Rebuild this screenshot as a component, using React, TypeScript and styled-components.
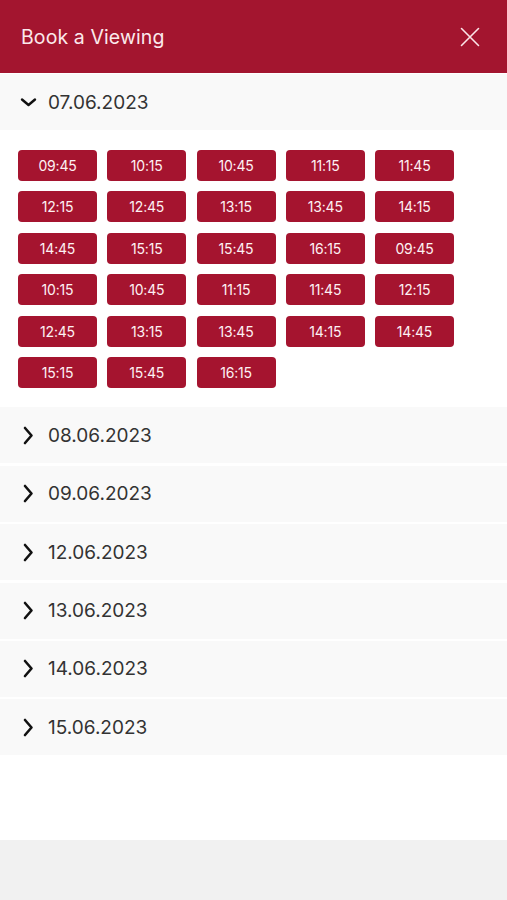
import React from 'react'
import styled, { createGlobalStyle } from 'styled-components'

const GlobalStyle = createGlobalStyle`
  html, body {
    margin: 0;
    padding: 0;
    background: #ffffff;
  }
  * {
    box-sizing: border-box;
  }
`

const Page = styled.div`
  display: flex;
  flex-direction: column;
  height: 100vh;
  font-family: Inter, 'Open Sans', 'Liberation Sans', sans-serif;
  background: #ffffff;
`

const TopBar = styled.div`
  display: flex;
  align-items: center;
  justify-content: space-between;
  height: 73px;
  padding: 0 27px 0 21px;
  background: #a3152f;
  flex-shrink: 0;
`

const Title = styled.h1`
  margin: 0;
  font-size: 19.5px;
  font-weight: 400;
  color: #fbe9ec;
  letter-spacing: 0.1px;
`

const CloseButton = styled.button`
  all: unset;
  cursor: pointer;
  display: flex;
  width: 20px;
  height: 20px;
  margin-top: 1px;
`

const List = styled.div`
  display: flex;
  flex-direction: column;
  gap: 2.4px;
  padding-top: 1px;
`

const DayHeader = styled.button`
  all: unset;
  cursor: pointer;
  display: flex;
  align-items: center;
  gap: 10px;
  width: 100%;
  height: 56px;
  padding: 0 0 0 19px;
  background: #f9f9f9;
  color: #333333;
  font-size: 19px;
  font-weight: 400;
`

const ChevronBox = styled.span`
  display: flex;
  width: 19px;
  justify-content: center;
`

const Slots = styled.div`
  display: grid;
  grid-template-columns: repeat(5, 79px);
  grid-auto-rows: 31px;
  column-gap: 10.25px;
  row-gap: 10.4px;
  padding: 20px 18px 17px;
  background: #ffffff;
`

const Slot = styled.button`
  all: unset;
  cursor: pointer;
  display: flex;
  align-items: center;
  justify-content: center;
  background: #a5142f;
  border-radius: 4px;
  color: #fdf1f3;
  font-size: 14px;
  font-weight: 400;
  letter-spacing: -0.2px;
`

const Filler = styled.div`
  flex: 1;
  background: #ffffff;
`

const Footer = styled.div`
  height: 60px;
  flex-shrink: 0;
  background: #f1f1f1;
`

const Chevron = ({ open }: { open: boolean }) => (
  <svg width="19" height="19" viewBox="0 0 19 19" fill="none">
    {open ? (
      <path d="M3 6.5 L9.5 12 L16 6.5" stroke="#111" strokeWidth="2.4" strokeLinecap="round" strokeLinejoin="round" />
    ) : (
      <path d="M6 2 L12.5 9.5 L6 17" stroke="#111" strokeWidth="2.6" strokeLinecap="round" strokeLinejoin="round" />
    )}
  </svg>
)

const times = [
  '09:45', '10:15', '10:45', '11:15', '11:45',
  '12:15', '12:45', '13:15', '13:45', '14:15',
  '14:45', '15:15', '15:45', '16:15', '09:45',
  '10:15', '10:45', '11:15', '11:45', '12:15',
  '12:45', '13:15', '13:45', '14:15', '14:45',
  '15:15', '15:45', '16:15',
]

const days = ['07.06.2023', '08.06.2023', '09.06.2023', '12.06.2023', '13.06.2023', '14.06.2023', '15.06.2023']

export default function App() {
  const [openDay, setOpenDay] = React.useState<string | null>(days[0])

  return (
    <>
      <GlobalStyle />
      <Page>
        <TopBar>
          <Title>Book a Viewing</Title>
          <CloseButton aria-label="Close">
            <svg width="20" height="20" viewBox="0 0 20 20" fill="none">
              <path d="M1.5 1.5 L18.5 18.5 M18.5 1.5 L1.5 18.5" stroke="#fbe4e8" strokeWidth="1.6" strokeLinecap="round" />
            </svg>
          </CloseButton>
        </TopBar>

        <List>
          {days.map((day) => {
            const open = openDay === day
            return (
              <div key={day}>
                <DayHeader onClick={() => setOpenDay(open ? null : day)}>
                  <ChevronBox>
                    <Chevron open={open} />
                  </ChevronBox>
                  {day}
                </DayHeader>
                {open && (
                  <Slots>
                    {times.map((t, i) => (
                      <Slot key={i}>{t}</Slot>
                    ))}
                  </Slots>
                )}
              </div>
            )
          })}
        </List>

        <Filler />
        <Footer />
      </Page>
    </>
  )
}
